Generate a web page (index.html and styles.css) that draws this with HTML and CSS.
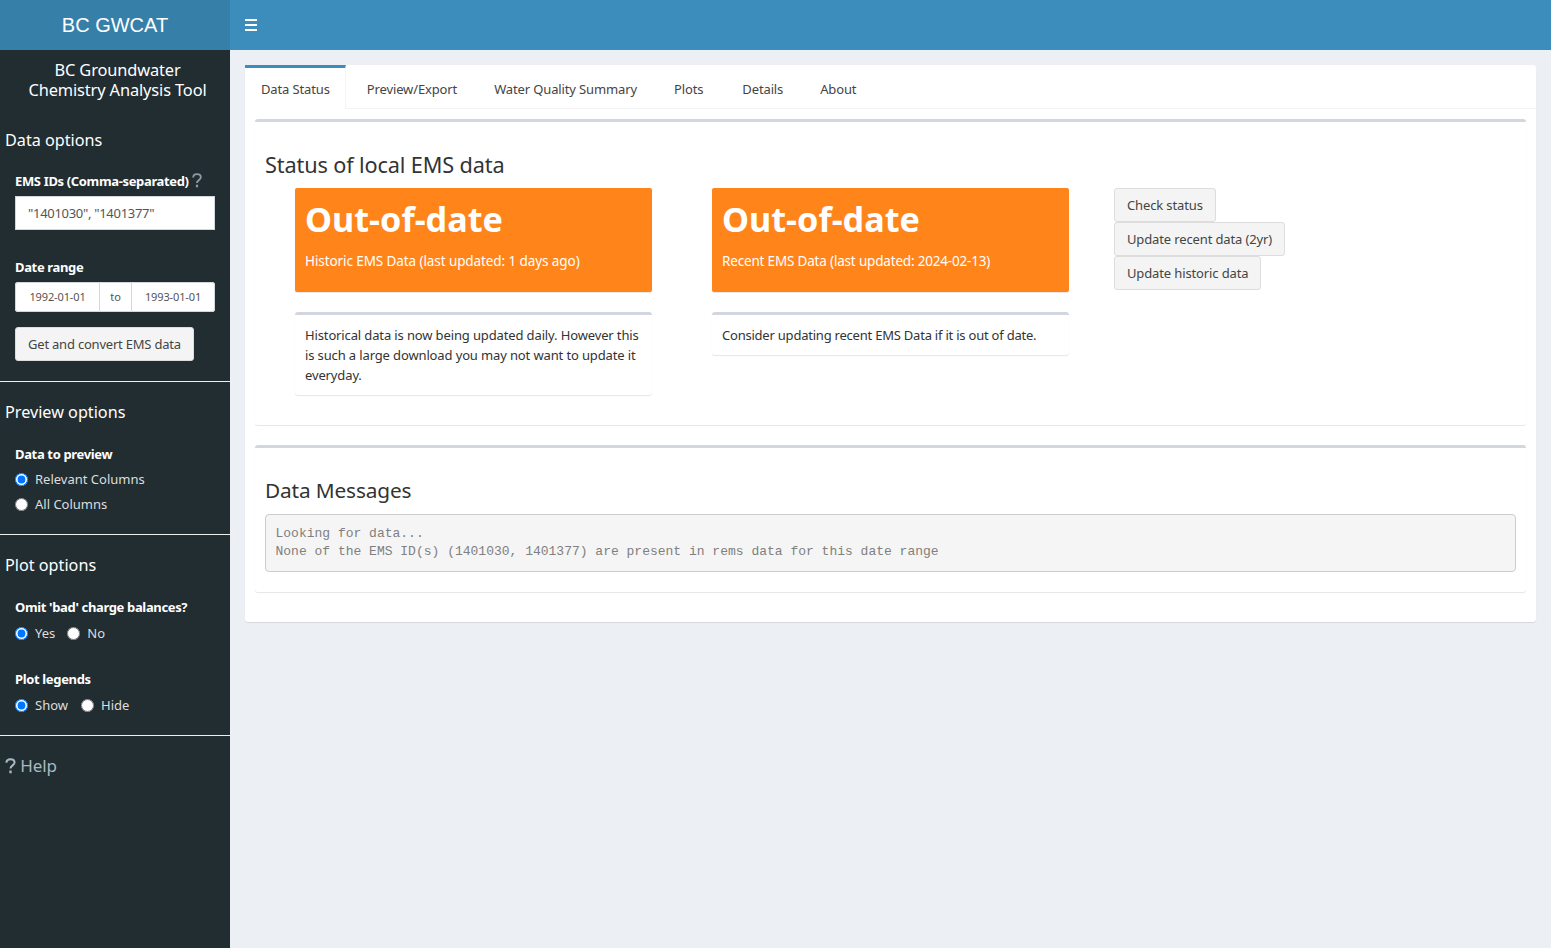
FILE: index.html
```html
<!DOCTYPE html>
<html lang="en">
<head>
    <meta charset="UTF-8">
    <meta name="viewport" content="width=device-width, initial-scale=1.0">
    <title>BC GWCAT</title>
    <link rel="stylesheet" href="styles.css">
</head>
<body>
    <header class="main-header">
        <div class="logo">BC GWCAT</div>
        <nav class="navbar">
            <a class="sidebar-toggle" href="#" aria-label="Toggle navigation">
                <svg width="12" height="13" viewBox="0 0 12 13"><path d="M0 1h12v2H0zM0 6h12v2H0zM0 11h12v2H0z" fill="#fff"/></svg>
            </a>
        </nav>
    </header>

    <div class="wrapper">
        <aside class="sidebar">
            <div class="app-title">BC Groundwater<br>Chemistry Analysis Tool</div>

            <h4 class="side-heading first">Data options</h4>
            <div class="field ems-field">
                <label for="ems-ids">EMS IDs (Comma-separated)
                    <svg class="hint" width="10" height="15" viewBox="0 0 10 15"><path d="M1.2 4.4C1.2 2.4 2.8 1.1 5 1.1S8.8 2.4 8.8 4.2C8.8 6.8 5 7 5 9.9" fill="none" stroke="currentColor" stroke-width="1.9"/><path d="M3.9 11.7h2.2v2.6H3.9z" fill="currentColor"/></svg>
                </label>
                <input class="text-input" type="text" id="ems-ids" value="&quot;1401030&quot;, &quot;1401377&quot;">
            </div>
            <div class="field date-field">
                <label>Date range</label>
                <div class="date-range">
                    <input type="text" value="1992-01-01">
                    <span class="date-to">to</span>
                    <input type="text" value="1993-01-01">
                </div>
            </div>
            <button class="btn get-btn">Get and convert EMS data</button>
            <hr class="side-rule rule-1">

            <h4 class="side-heading">Preview options</h4>
            <div class="field preview-field">
                <label class="preview-label">Data to preview</label>
                <label class="radio-row"><input type="radio" name="preview" checked> Relevant Columns</label>
                <label class="radio-row"><input type="radio" name="preview"> All Columns</label>
            </div>
            <hr class="side-rule rule-2">

            <h4 class="side-heading">Plot options</h4>
            <div class="field omit-field">
                <label>Omit 'bad' charge balances?</label>
                <div class="radio-inline">
                    <label><input type="radio" name="omit" checked> Yes</label>
                    <label><input type="radio" name="omit"> No</label>
                </div>
            </div>
            <div class="field legend-field">
                <label>Plot legends</label>
                <div class="radio-inline">
                    <label><input type="radio" name="legend" checked> Show</label>
                    <label><input type="radio" name="legend"> Hide</label>
                </div>
            </div>
            <hr class="side-rule rule-3">

            <a class="help-link" href="#">
                <svg width="11" height="16" viewBox="0 0 10 15"><path d="M1.2 4.4C1.2 2.4 2.8 1.1 5 1.1S8.8 2.4 8.8 4.2C8.8 6.8 5 7 5 9.9" fill="none" stroke="currentColor" stroke-width="1.9"/><path d="M3.9 11.7h2.2v2.6H3.9z" fill="currentColor"/></svg>
                Help
            </a>
        </aside>

        <main class="content">
            <div class="tab-box">
                <ul class="tabs">
                    <li class="active"><a href="#">Data Status</a></li>
                    <li><a href="#">Preview/Export</a></li>
                    <li><a href="#">Water Quality Summary</a></li>
                    <li class="plots-tab"><a href="#">Plots</a></li>
                    <li><a href="#">Details</a></li>
                    <li><a href="#">About</a></li>
                </ul>
                <div class="tab-body">
                    <section class="box status-box">
                        <h3>Status of local EMS data</h3>
                        <div class="status-row">
                            <div class="status-col">
                                <div class="value-box">
                                    <div class="value">Out-of-date</div>
                                    <p>Historic EMS Data (last updated: 1 days ago)</p>
                                </div>
                                <div class="box note">Historical data is now being updated daily. However this is such a large download you may not want to update it everyday.</div>
                            </div>
                            <div class="status-col">
                                <div class="value-box">
                                    <div class="value">Out-of-date</div>
                                    <p class="recent-text">Recent EMS Data (last updated: 2024-02-13)</p>
                                </div>
                                <div class="box note note-short">Consider updating recent EMS Data if it is out of date.</div>
                            </div>
                            <div class="status-actions">
                                <button class="btn">Check status</button>
                                <button class="btn">Update recent data (2yr)</button>
                                <button class="btn">Update historic data</button>
                            </div>
                        </div>
                    </section>
                    <section class="box messages-box">
                        <h3>Data Messages</h3>
                        <pre>Looking for data...
None of the EMS ID(s) (1401030, 1401377) are present in rems data for this date range</pre>
                    </section>
                </div>
            </div>
        </main>
    </div>
</body>
</html>
```

FILE: styles.css
```css
* {
    box-sizing: border-box;
}
body {
    margin: 0;
    height: 948px;
    overflow: hidden;
    font-family: "Noto Sans", sans-serif;
    font-size: 13px;
    line-height: 20px;
    letter-spacing: -0.13px;
    color: #333;
    background-color: #ecf0f5;
}
a {
    text-decoration: none;
}

/* header */
.main-header {
    display: flex;
    height: 50px;
    background-color: #3c8dbc;
}
.logo {
    width: 230px;
    background-color: #367fa9;
    color: white;
    font-family: "Liberation Sans", Arial, sans-serif;
    font-size: 20px;
    line-height: 50px;
    letter-spacing: 0;
    text-align: center;
}
.navbar {
    flex: 1;
}
.sidebar-toggle {
    display: block;
    width: 42px;
    height: 50px;
    padding: 18px 15px;
}
.sidebar-toggle svg {
    display: block;
}

/* sidebar */
.wrapper {
    display: flex;
    height: 898px;
}
.sidebar {
    width: 230px;
    flex-shrink: 0;
    background-color: #222d32;
    color: white;
}
.app-title {
    padding: 10px 0 0 5px;
    font-size: 16.4px;
    text-align: center;
}
.side-heading {
    margin: 0;
    padding-left: 5px;
    font-size: 16.2px;
    font-weight: normal;
    line-height: 20px;
    letter-spacing: 0;
}
.side-heading.first {
    margin-top: 30px;
}
.rule-1 + .side-heading {
    margin-top: 20px;
}
.field {
    padding: 0 15px;
}
.field label {
    display: block;
    font-weight: bold;
    letter-spacing: -0.35px;
}
.ems-field {
    margin-top: 21px;
}
.hint {
    color: #8a9ba3;
    vertical-align: -2px;
}
.text-input {
    display: block;
    width: 200px;
    height: 34px;
    margin-top: 5px;
    padding: 6px 12px;
    border: 1px solid #d2d6de;
    font: inherit;
    letter-spacing: -0.3px;
    color: #555;
}
.date-field {
    margin-top: 27px;
}
.date-range {
    display: flex;
    width: 200px;
    height: 30px;
    margin-top: 5px;
    font-size: 11px;
    background-color: white;
    border-radius: 3px;
}
.date-range input {
    width: 85px;
    min-width: 0;
    border: 1px solid #d2d6de;
    border-radius: 3px 0 0 3px;
    font: inherit;
    letter-spacing: inherit;
    text-align: center;
    color: #555;
}
.date-range input:last-child {
    width: 84px;
    border-radius: 0 3px 3px 0;
}
.date-to {
    width: 31px;
    color: #555;
    line-height: 28px;
    text-align: center;
    border-top: 1px solid #d2d6de;
    border-bottom: 1px solid #d2d6de;
}
.btn {
    display: block;
    height: 34px;
    padding: 6px 12px;
    border: 1px solid #ddd;
    border-radius: 3px;
    background-color: #f4f4f4;
    color: #444;
    font: inherit;
    letter-spacing: inherit;
    white-space: nowrap;
}
.get-btn {
    margin: 15px 0 0 15px;
    letter-spacing: -0.21px;
}
.side-rule {
    margin: 20px 0;
    border: 0;
    border-top: 1px solid #eee;
}
.preview-field {
    margin-top: 22px;
}
.preview-label {
    margin-bottom: 2px;
}
.field .radio-row {
    display: flex;
    align-items: center;
    height: 25px;
    font-weight: normal;
    letter-spacing: 0;
    color: #ddd;
}
input[type="radio"] {
    width: 13px;
    height: 13px;
    margin: 1px 7px 0 0;
}
.radio-inline {
    display: flex;
    gap: 12px;
    height: 25px;
    margin-top: 3px;
}
.field .radio-inline label {
    display: flex;
    align-items: center;
    font-weight: normal;
    letter-spacing: 0;
    color: #ddd;
}
.omit-field {
    margin-top: 22px;
}
.legend-field {
    margin-top: 24px;
}
.legend-field .radio-inline {
    gap: 13px;
}
.rule-2 {
    margin: 18px 0 20px;
}
.rule-3 {
    margin: 18px 0 20px;
}
.help-link {
    display: block;
    padding-left: 5px;
    font-size: 17px;
    color: #a9b9c0;
}
.help-link svg {
    vertical-align: -2px;
}

/* main area */
.content {
    flex: 1;
    padding: 15px;
}
.tab-box {
    height: 557px;
    background-color: white;
    border-radius: 3px;
    box-shadow: 0 1px 1px rgba(0,0,0,0.1);
}
.tabs {
    display: flex;
    height: 44px;
    margin: 0;
    padding: 0;
    list-style: none;
    border-bottom: 1px solid #f4f4f4;
}
.tabs li {
    padding: 3px 5px 0 0;
}
.tabs a {
    display: block;
    padding: 11px 16px;
    color: #444;
}
.tabs .active {
    height: 44px;
    margin-right: 5px;
    padding: 0;
    border-top: 3px solid #3c8dbc;
    border-right: 1px solid #f4f4f4;
    background-color: white;
}
.tabs .active a {
    padding-right: 15px;
}
.tabs .plots-tab {
    margin-right: 2px;
}
.tab-body {
    padding: 10px;
}
.box {
    border-top: 3px solid #d2d6de;
    border-radius: 3px;
    background-color: white;
    box-shadow: 0 1px 1px rgba(0,0,0,0.1);
}
.box h3 {
    margin: 0;
    padding: 0 10px;
    font-size: 21.7px;
    font-weight: normal;
    line-height: 26px;
}
.status-box {
    height: 306px;
    padding-top: 30px;
}
.status-row {
    display: flex;
    gap: 60px;
    margin: 10px 0 0 40px;
}
.status-col {
    width: 357px;
}
.value-box {
    height: 104px;
    padding: 9px 10px;
    border-radius: 2px;
    background-color: #ff851b;
    color: white;
    box-shadow: 0 1px 1px rgba(0,0,0,0.1);
}
.value {
    font-size: 34.2px;
    font-weight: bold;
    line-height: 43px;
    letter-spacing: 0;
}
.value-box p {
    margin: 11px 0 0;
    font-size: 13.5px;
    letter-spacing: -0.09px;
}
.value-box .recent-text {
    letter-spacing: -0.18px;
}
.note {
    margin-top: 20px;
    padding: 10px;
    color: #333;
}
.note-short {
    letter-spacing: -0.22px;
}
.status-actions {
    margin-left: -15px;
}
.messages-box {
    height: 147px;
    margin-top: 20px;
    padding-top: 29px;
}
.messages-box h3 {
    font-size: 20.8px;
}
.messages-box pre {
    height: 58px;
    margin: 11px 10px 0;
    padding: 9.5px;
    border: 1px solid #ccc;
    border-radius: 4px;
    background-color: #f5f5f5;
    color: #808080;
    font-family: "Liberation Mono", "Courier New", monospace;
    font-size: 13px;
    line-height: 18px;
    letter-spacing: 0;
}
```
